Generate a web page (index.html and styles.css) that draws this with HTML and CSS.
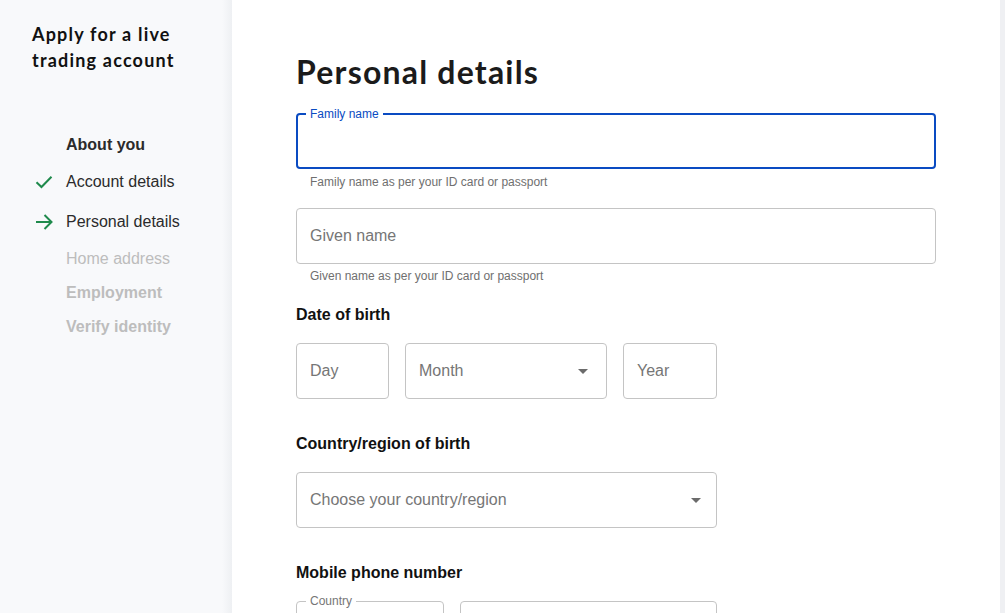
FILE: index.html
```html
<!DOCTYPE html>
<html lang="en">
<head>
<meta charset="utf-8">
<title>Personal details</title>
<link rel="stylesheet" href="styles.css">
</head>
<body>
<div class="page">
  <aside class="sidebar">
    <h2 class="side-title">Apply for a live trading account</h2>
    <nav class="steps">
      <div class="step step-group">About you</div>
      <div class="step step-done">
        <span class="step-icon">
          <svg width="18" height="14" viewBox="0 0 18 14"><path d="M1.5 7.2 L6.5 12 L16.5 1.8" fill="none" stroke="#1f8a4c" stroke-width="2"/></svg>
        </span>Account details
      </div>
      <div class="step step-current">
        <span class="step-icon">
          <svg width="18" height="16" viewBox="0 0 18 16"><path d="M1 8 H16.5 M9.5 1 L16.5 8 L9.5 15" fill="none" stroke="#1f8a4c" stroke-width="2"/></svg>
        </span>Personal details
      </div>
      <div class="step step-todo step-home">Home address</div>
      <div class="step step-todo step-bold">Employment</div>
      <div class="step step-todo step-bold">Verify identity</div>
    </nav>
  </aside>
  <main class="main">
    <h1 class="page-title">Personal details</h1>

    <div class="field field-first">
      <div class="control control-focus">
        <span class="float-label float-label-focus">Family name</span>
      </div>
      <div class="helper">Family name as per your ID card or passport</div>
    </div>

    <div class="field field-second">
      <div class="control"><span class="placeholder">Given name</span></div>
      <div class="helper">Given name as per your ID card or passport</div>
    </div>

    <h3 class="section-label label-dob">Date of birth</h3>
    <div class="dob-row">
      <div class="control dob-day"><span class="placeholder">Day</span></div>
      <div class="control dob-month select"><span class="placeholder">Month</span><span class="caret"></span></div>
      <div class="control dob-year"><span class="placeholder">Year</span></div>
    </div>

    <h3 class="section-label label-country">Country/region of birth</h3>
    <div class="control select country-select"><span class="placeholder">Choose your country/region</span><span class="caret"></span></div>

    <h3 class="section-label label-country">Mobile phone number</h3>
    <div class="phone-row">
      <div class="control phone-country">
        <span class="float-label">Country</span>
      </div>
      <div class="control phone-number"></div>
    </div>
  </main>
  <div class="scroll-track"></div>
</div>
</body>
</html>
```

FILE: styles.css
```css
* { box-sizing: border-box; }

html, body {
  margin: 0;
  padding: 0;
  height: 100%;
  overflow: hidden;
}

body {
  font-family: "Liberation Sans", Arial, sans-serif;
  color: #2b2b2b;
  background: #ffffff;
}

.page {
  display: flex;
  height: 613px;
  overflow: hidden;
}

/* Sidebar */
.sidebar {
  width: 232px;
  flex: none;
  background: linear-gradient(to right, #f8f9fb 0, #f8f9fb 222px, #eef0f3 232px);
  padding: 21px 0 0 32px;
}

.side-title {
  margin: 0;
  font-family: Lato, "Open Sans", sans-serif;
  font-weight: 700;
  font-size: 18px;
  line-height: 26px;
  color: #111111;
  width: 180px;
  letter-spacing: 1.2px;
}

.steps {
  display: flex;
  flex-direction: column;
  margin-top: 62px;
}

.step {
  display: flex;
  align-items: center;
  height: 20px;
  font-size: 16px;
  line-height: 20px;
  padding-left: 34px;
  color: #2b2b2b;
  white-space: nowrap;
}

.step-group {
  font-weight: 700;
}

.step-done,
.step-current {
  padding-left: 0;
  margin-top: 17px;
}

.step-current {
  margin-top: 20px;
}

.step-icon {
  width: 34px;
  display: flex;
  align-items: center;
  padding-left: 3px;
}

.step-todo {
  color: #bdbdbd;
}

.step-home { margin-top: 17px; }

.step-bold {
  font-weight: 700;
  margin-top: 14px;
}

/* Main */
.main {
  flex: 1;
  padding: 0 64px 0 64px;
  background: #ffffff;
}

.page-title {
  margin: 52px 0 0 0;
  font-family: Lato, "Open Sans", sans-serif;
  font-weight: 700;
  font-size: 32px;
  line-height: 40px;
  color: #1b1b1b;
  letter-spacing: 1.2px;
}

.field-first {
  margin-top: 21px;
}

.field-second {
  margin-top: 19px;
}

.field-first .helper {
  margin-top: 6px;
}

.control {
  position: relative;
  height: 56px;
  border: 1px solid #c4c4c4;
  border-radius: 4px;
  display: flex;
  align-items: center;
  padding: 0 13px;
  background: #ffffff;
}

.control-focus {
  border: 2px solid #0a4bc2;
  padding: 0 12px;
}

.float-label {
  position: absolute;
  top: -8px;
  left: 9px;
  padding: 0 4px;
  background: #ffffff;
  font-size: 12px;
  line-height: 14px;
  color: #767676;
}

.float-label-focus {
  left: 8px;
  color: #0a4bc2;
}

.placeholder {
  font-size: 16px;
  color: #767676;
  flex: 1;
}

.helper {
  margin-top: 5px;
  padding-left: 14px;
  font-size: 12px;
  line-height: 14px;
  color: #6f6f6f;
}

.section-label {
  margin: 0;
  font-size: 16px;
  line-height: 20px;
  font-weight: 700;
  color: #111111;
}

.label-dob { margin-top: 22px; }
.label-country { margin-top: 35px; }

.dob-row,
.phone-row {
  display: flex;
  gap: 16px;
  margin-top: 18px;
}

.dob-day { width: 93px; }
.dob-month { width: 202px; }
.dob-year { width: 94px; }

.caret {
  width: 0;
  height: 0;
  border-left: 5.5px solid transparent;
  border-right: 5.5px solid transparent;
  border-top: 5.5px solid #6b6b6b;
  margin-right: 5px;
}

.country-select {
  width: 421px;
  margin-top: 18px;
}

.country-select .caret {
  margin-right: 2px;
}

.phone-country { width: 148px; }
.phone-number { width: 257px; }

.scroll-track {
  width: 5px;
  flex: none;
  background: #eff0f3;
}
```
